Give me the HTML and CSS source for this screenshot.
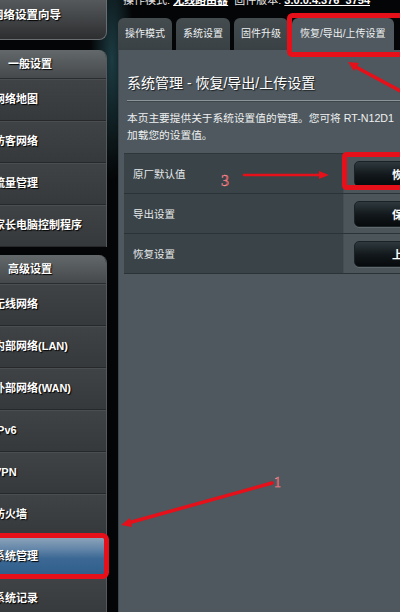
FILE: index.html
```html
<!DOCTYPE html>
<html lang="zh-CN">
<head>
<meta charset="utf-8">
<title>系统管理 - 恢复/导出/上传设置</title>
<link rel="stylesheet" href="styles.css">
</head>
<body>
<div class="page">
  <aside class="sidebar">
    <div class="wizard">网络设置向导</div>
    <div class="group">
      <div class="group-head">一般设置</div>
      <div class="item">网络地图</div>
      <div class="item">访客网络</div>
      <div class="item">流量管理</div>
      <div class="item">家长电脑控制程序</div>
    </div>
    <div class="group">
      <div class="group-head">高级设置</div>
      <div class="item">无线网络</div>
      <div class="item">内部网络(LAN)</div>
      <div class="item">外部网络(WAN)</div>
      <div class="item">IPv6</div>
      <div class="item">VPN</div>
      <div class="item">防火墙</div>
      <div class="item active">系统管理</div>
      <div class="item">系统记录</div>
    </div>
  </aside>
  <main class="main">
    <div class="topinfo"><span class="topline">操作模式: <u>无线路由器</u>&nbsp;&nbsp;固件版本: <u>3.0.0.4.376_3754</u></span></div>
    <nav class="tabs">
      <div class="tab">操作模式</div>
      <div class="tab">系统设置</div>
      <div class="tab">固件升级</div>
      <div class="tab active">恢复/导出/上传设置</div>
    </nav>
    <section class="panel">
      <h1 class="title">系统管理 - 恢复/导出/上传设置</h1>
      <div class="rule"></div>
      <p class="desc">本页主要提供关于系统设置值的管理。您可将 RT-N12D1<br>加载您的设置值。</p>
      <div class="settings">
        <div class="row">
          <div class="label">原厂默认值</div>
          <div class="action"><button class="btn">恢复</button></div>
        </div>
        <div class="row">
          <div class="label">导出设置</div>
          <div class="action"><button class="btn">保存</button></div>
        </div>
        <div class="row">
          <div class="label">恢复设置</div>
          <div class="action"><button class="btn">上传</button></div>
        </div>
      </div>
    </section>
  </main>
  <svg class="marks" width="400" height="612" viewBox="0 0 400 612" aria-hidden="true">
    <g fill="none" stroke="#e5101a" stroke-width="5" stroke-linejoin="round">
      <rect x="289.5" y="15.5" width="120" height="39" rx="3"/>
      <rect x="344.5" y="154.5" width="70" height="33" rx="2"/>
      <rect x="-5" y="535.5" width="111.5" height="41" rx="4"/>
    </g>
    <g stroke="#e5101a" stroke-linecap="round">
      <line x1="244" y1="175" x2="321" y2="175" stroke-width="2.5"/>
      <line x1="354" y1="66" x2="404" y2="93" stroke-width="3.5"/>
      <line x1="272" y1="483" x2="128" y2="523" stroke-width="3.5"/>
    </g>
    <g fill="#e5101a">
      <polygon points="329,175 319,171 319,179"/>
      <polygon points="348,62 359,63 354,71"/>
      <polygon points="121,525 130,518 132,527"/>
    </g>
    <text class="num" x="221" y="186">3</text>
    <text class="num small" x="274" y="487">1</text>
  </svg>
</div>
</body>
</html>
```

FILE: styles.css
```css
* { box-sizing: border-box; margin: 0; padding: 0; }

html, body {
  width: 400px;
  height: 612px;
  overflow: hidden;
}

body {
  background: #030405;
  color: #fff;
  font-family: "Liberation Sans", "Noto Sans CJK SC", sans-serif;
}

.page {
  position: relative;
  display: flex;
  width: 400px;
  height: 612px;
  overflow: hidden;
  background:
    radial-gradient(ellipse 22px 120px at 112px 60px, rgba(48, 104, 116, 0.55), rgba(48, 104, 116, 0) 100%),
    #040506;
}

/* ---------- sidebar ---------- */
.sidebar {
  width: 107px;
  flex: none;
}

.wizard {
  height: 40px;
  padding-top: 7px;
  line-height: 16px;
  font-size: 11.5px;
  font-weight: bold;
  text-indent: -8px;
  white-space: nowrap;
  background: linear-gradient(#56595b, #2c2e30);
  border-right: 1px solid #6a6d70;
  border-bottom: 1px solid #6a6d70;
  border-radius: 0 0 8px 0;
  text-shadow: 1px 1px 1px #000;
}

.group {
  margin-top: 10px;
  border-right: 1px solid #55595c;
  border-radius: 0 8px 0 0;
  overflow: hidden;
}

.group + .group { margin-top: 8px; }

.group-head {
  height: 29px;
  line-height: 28px;
  padding-left: 8px;
  font-size: 11px;
  font-weight: bold;
  background: linear-gradient(#63686b, #45494c);
  border-bottom: 1px solid #2a2c2e;
  text-shadow: 1px 1px 1px #000;
}

.item {
  height: 42px;
  line-height: 41px;
  font-size: 11px;
  font-weight: bold;
  text-indent: -6px;
  white-space: nowrap;
  background: linear-gradient(#404346, #36393b);
  border-bottom: 1px solid #26282a;
  box-shadow: inset 0 1px 0 #4b4e51;
  text-shadow: 1px 1px 1px #000;
}

.item.active {
  background: linear-gradient(#92a8bc 0%, #6688aa 30%, #3b6894 55%, #2f5d8a 100%);
  box-shadow: none;
}

/* ---------- main ---------- */
.main {
  flex: 1;
  min-width: 0;
  padding-left: 11px;
  display: flex;
  flex-direction: column;
}

.topinfo {
  height: 18px;
  padding-left: 5px;
  overflow: hidden;
  font-size: 11px;
  white-space: nowrap;
  color: #e8e8e8;
}

.topline {
  display: block;
  margin-top: -6px;
  line-height: 12px;
}

.topline u { font-weight: bold; color: #fff; }

.tabs {
  display: flex;
  gap: 4px;
  height: 32px;
  white-space: nowrap;
}

.tab {
  padding: 0 7px;
  line-height: 32px;
  font-size: 10px;
  color: #eef0f1;
  background: linear-gradient(#444c50, #394144);
  border-radius: 6px 6px 0 0;
}

.tab.active {
  padding: 0 8px;
  background: #4f595f;
}

.panel {
  flex: 1;
  padding-left: 5px;
  background: #4e585e;
  border-left: 1px solid #3e474b;
}

.title {
  margin: 23px 0 0 3px;
  font-size: 14px;
  line-height: 20px;
  font-weight: normal;
  white-space: nowrap;
  color: #fff;
  text-shadow: 1px 1px 1px #1a1f22;
}

.rule {
  height: 1px;
  margin: 7px 0 0 3px;
  background: #8c9599;
  box-shadow: 0 1px 0 #3e464a;
}

.desc {
  margin: 9px 0 0 3px;
  font-size: 10.7px;
  line-height: 17px;
  white-space: nowrap;
  color: #eef0f1;
}

.settings {
  width: 340px;
  margin-top: 9px;
  border-top: 1px solid #30373b;
}

.row {
  display: flex;
  height: 40px;
  border-bottom: 1px solid #2c3336;
}

.label {
  flex: none;
  width: 219px;
  padding-left: 9px;
  display: flex;
  align-items: center;
  font-size: 10.5px;
  color: #e8eaeb;
  background: #3a4347;
}

.action {
  flex: 1;
  padding-left: 10px;
  display: flex;
  align-items: center;
  background: #4b555a;
  border-left: 1px solid #454e52;
}

.btn {
  flex: none;
  width: 98px;
  height: 26px;
  border: 1px solid #1b2226;
  border-radius: 5px;
  background: linear-gradient(#2f393e, #11171a 55%, #070a0c);
  box-shadow: 0 1px 0 rgba(255, 255, 255, 0.12);
  color: #fff;
  font-family: "Liberation Sans", "Noto Sans CJK SC", sans-serif;
  font-size: 11px;
  font-weight: bold;
}

/* ---------- annotations ---------- */
.marks {
  position: absolute;
  left: 0;
  top: 0;
  pointer-events: none;
}

.num {
  font-family: "Liberation Serif", serif;
  font-size: 16px;
  fill: #d8323e;
  stroke: #f3a0a6;
  stroke-width: 0.4;
}

.num.small {
  font-size: 14px;
}
```
